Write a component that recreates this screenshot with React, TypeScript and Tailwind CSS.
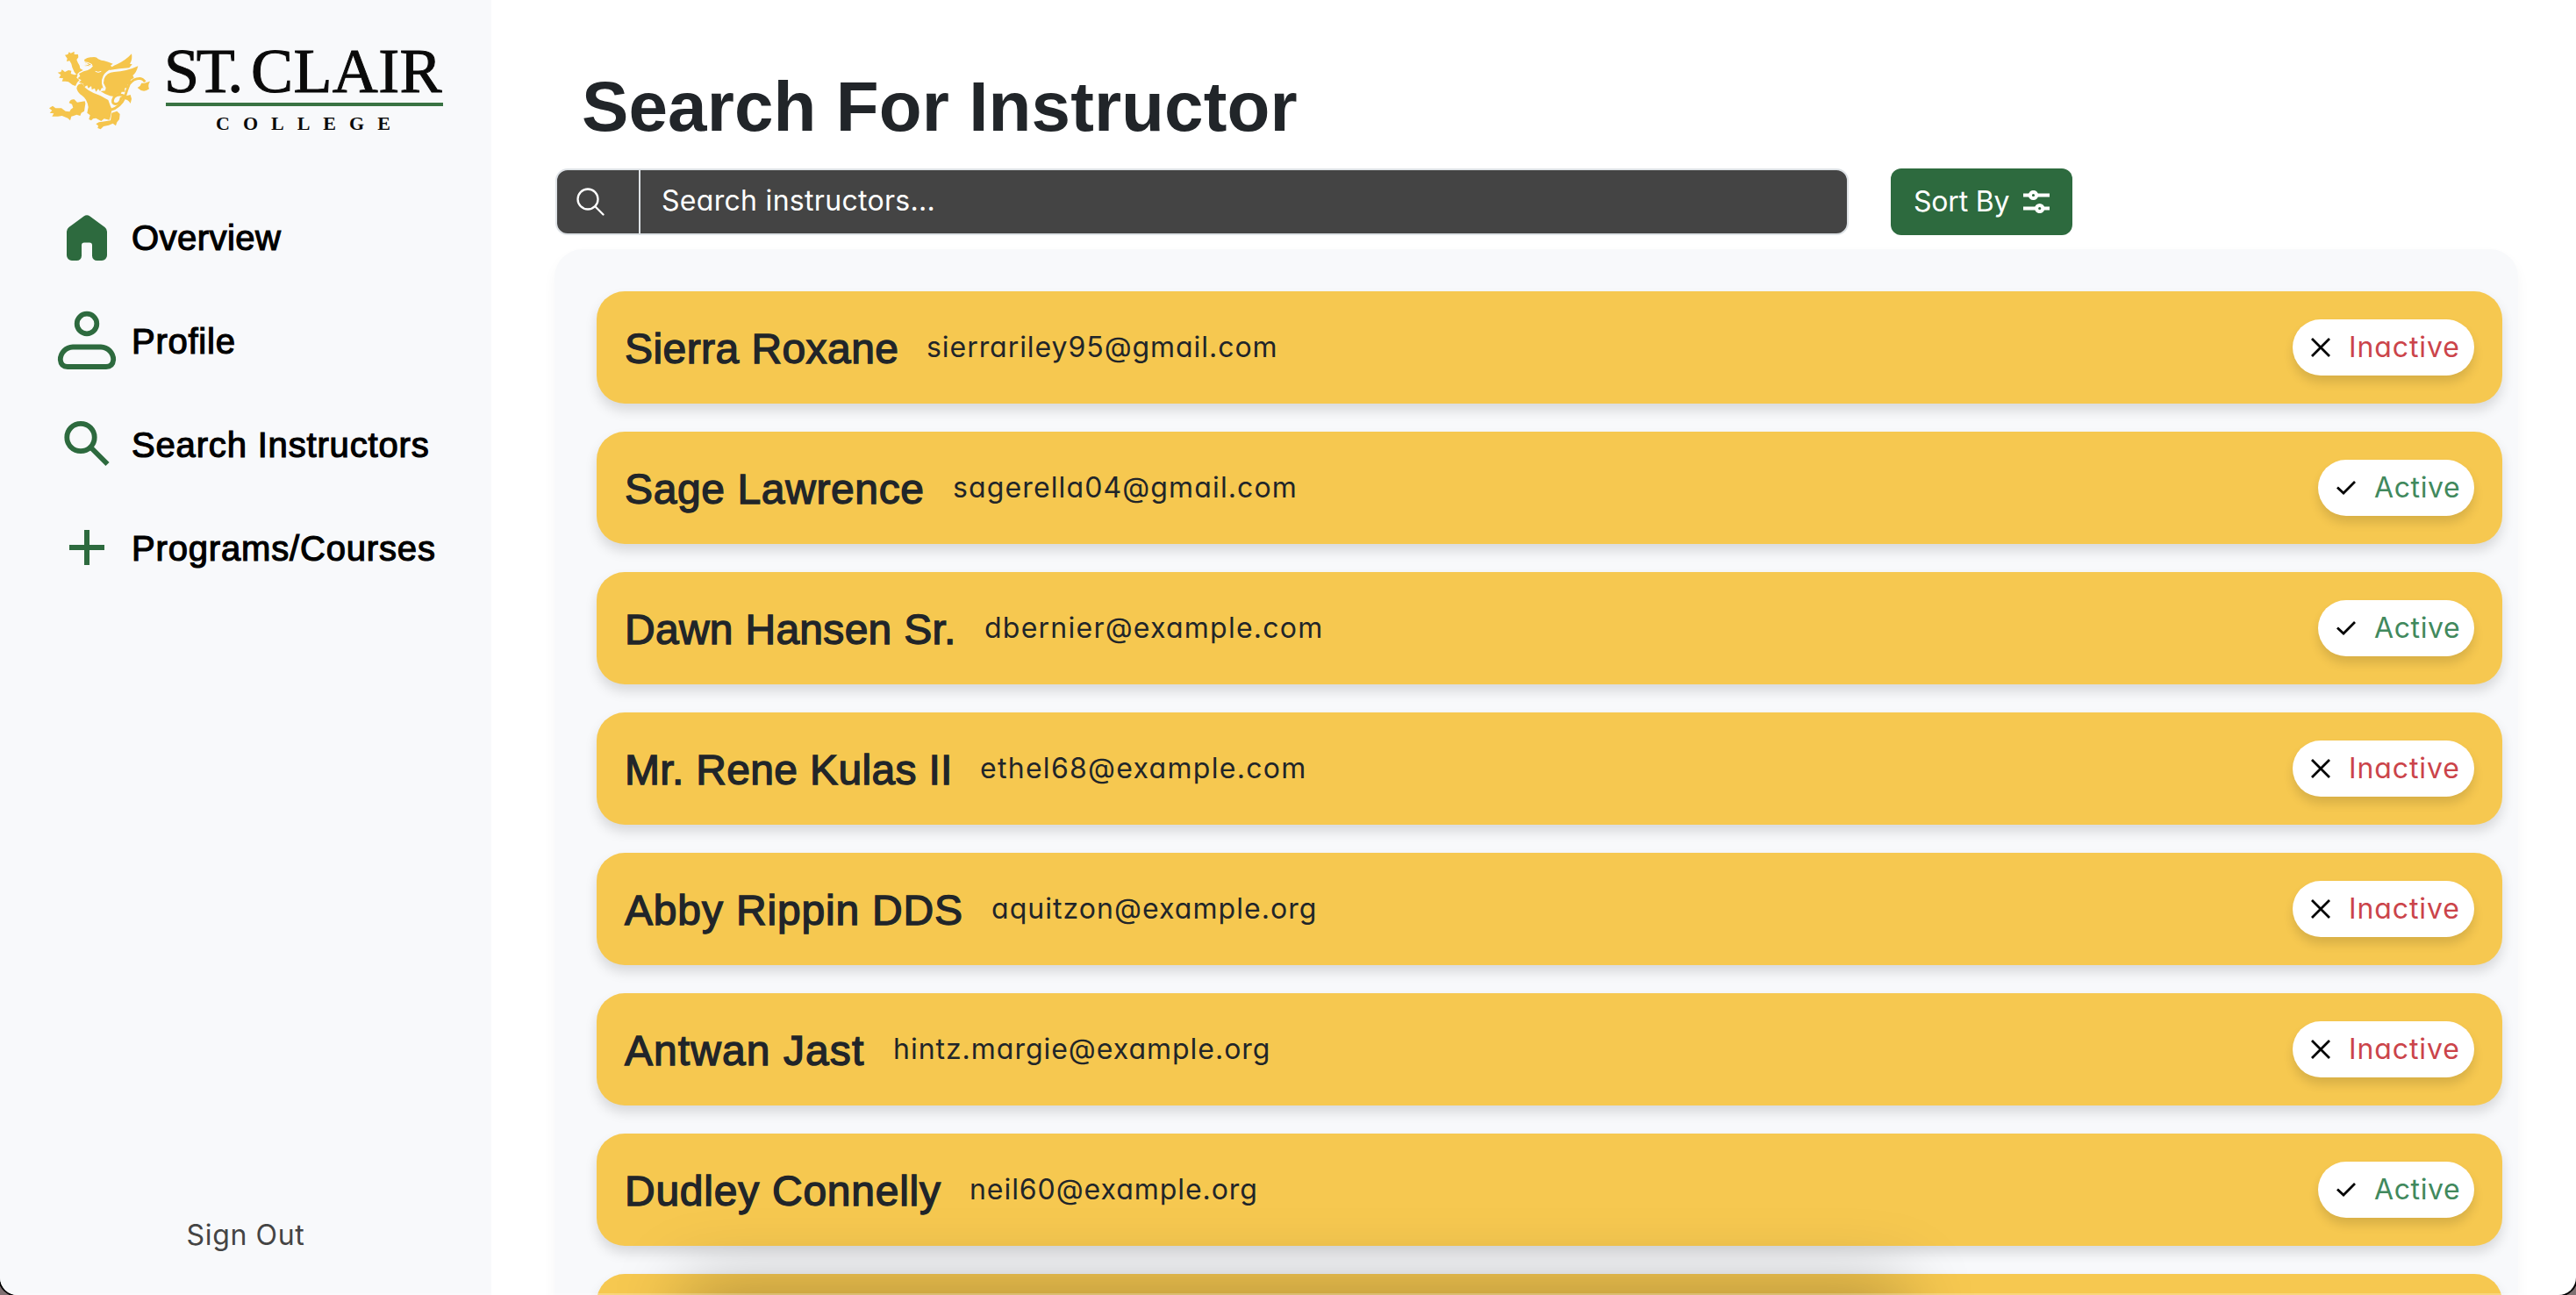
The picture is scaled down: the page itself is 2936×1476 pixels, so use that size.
import React from "react";

const HELV = "font-['Liberation_Sans',Arial,sans-serif]";
const POP = "font-['Inter',sans-serif] [font-feature-settings:'cv11','ss03']";

function Griffin() {
  return (
    <svg width="130" height="120" viewBox="0 0 390 360" fill="#f5c54c" className="shrink-0" aria-hidden="true">
      <path d="M72 68 L82 66 L86 58 L92 62 L104 56 L104 66 L117 66 L118 76 L112 84 L116 94 L122 104 L124 114 L134 120 L122 126 L112 136 L104 126 L97 110 L94 98 L88 88 L78 90 L80 80 Z" />
      <path d="M47 128 L58 126 L62 118 L72 126 L84 120 L94 122 L92 132 L104 136 L116 134 L112 146 L122 154 L114 162 L108 174 L98 170 L84 160 L74 158 L62 158 L66 148 L52 146 L58 136 Z" />
      <path d="M138 84 Q150 74 164 76 Q178 72 186 82 Q196 88 206 88 Q220 92 236 98 L228 104 L234 110 L222 120 Q206 130 202 142 Q196 154 198 166 L203 182 L198 180 L192 192 L186 184 L178 194 L174 182 L164 186 L162 174 L152 182 L148 172 L138 178 L134 166 L120 162 L128 154 L116 148 L124 140 L120 132 L136 124 L150 120 Q162 116 168 106 Q160 94 140 92 Z" />
      <path d="M136 92 Q152 92 165 101 Q152 111 133 103 Q146 102 152 100 Q142 97 136 92 Z" fill="#f5c54c" stroke="#f8f9fb" strokeWidth="3" />
      <path d="M222 120 Q232 106 250 100 Q280 86 300 64 Q304 84 294 98 L302 100 L292 112 Q260 114 222 120 Z" />
      <path d="M206 150 Q214 128 240 126 Q284 124 322 106 Q316 130 304 138 L308 146 L296 154 L300 162 L286 170 L290 178 L276 182 L278 194 L266 194 L262 204 L252 200 L240 210 L226 208 Q208 202 194 192 L210 190 L212 180 L204 164 Z" />
      <path d="M112 182 Q114 166 132 166 Q140 182 152 188 L170 198 Q196 206 220 222 Q226 240 232 252 Q230 276 224 290 L206 286 L196 294 L178 284 L168 286 L162 292 L154 288 L158 274 L148 266 L152 246 Q148 218 130 206 Q116 198 112 182 Z" />
      <path d="M18 250 L30 242 L40 250 L60 250 L74 260 L88 262 L92 254 L100 248 L96 236 L86 232 Q90 218 104 220 L114 230 L140 226 L142 234 L138 260 L128 266 L124 276 L112 272 L102 276 L94 278 L90 292 L82 284 L62 276 L48 278 L28 278 L34 268 L20 266 L28 258 Z" />
      <path d="M232 266 L250 260 L260 270 L258 288 L250 298 L246 310 L236 302 L222 308 L204 312 L194 322 L184 318 L186 310 L178 304 L188 298 L200 296 L228 292 Z" />
      <g fill="none" stroke="#f5c54c" strokeWidth="8.500">
        <path d="M228 256 Q262 246 276 214 Q284 186 292 168 Q306 148 328 148 Q340 150 346 160" />
        <path d="M276 208 Q254 198 240 212 Q228 234 246 236 Q262 234 264 216 Q280 206 294 222" />
      </g>
      <path d="M320 180 Q330 176 334 164 L344 164 L363 158 Q354 172 360 184 Q340 200 320 180 Z" />
      <path d="M282 208 L296 204 L300 218 L296 234 Q290 222 278 220 Z" />
      <path d="M176 124 Q186 130 196 124" fill="none" stroke="#f8f9fb" strokeWidth="3" />
    </svg>
  );
}

function Logo() {
  return (
    <div className="ml-[50px] flex h-[120px] w-[480px]">
      <Griffin />
      <div className="ml-[9px] w-[316px] font-['Liberation_Serif',serif] text-[#0a0a0a]">
        <div className="mt-[5px] flex h-[72px] items-start whitespace-nowrap text-[72px] leading-[72px]">
          <span className="-ml-[2px] w-[90px] tracking-[-3.2px] [-webkit-text-stroke:1px_#0a0a0a]">ST.</span>
          <span className="ml-[9px] tracking-[0.4px] [-webkit-text-stroke:1px_#0a0a0a]">CLAIR</span>
        </div>
        <div className="h-[4px] w-full bg-[#397343]" />
        <div className="ml-[57px] mt-[7px] whitespace-nowrap text-[22px] leading-[26px] font-bold tracking-[15px]">COLLEGE</div>
      </div>
    </div>
  );
}

const G = "#2d6a3e";

function HomeIcon() {
  return (
    <svg width="68" height="68" viewBox="0 0 68 68" aria-hidden="true">
      <path fill={G} d="M30.500 10.600a6 6 0 0 1 7 0l17 12.400q2.500 2 2.500 5V55a6 6 0 0 1-6 6H45.500a5.500 5.500 0 0 1-5.500-5.500V43.500a3 3 0 0 0-3-3h-6a3 3 0 0 0-3 3V55.500a5.500 5.500 0 0 1-5.500 5.500H17a6 6 0 0 1-6-6V28q0-3 2.500-5z" />
    </svg>
  );
}
function ProfileIcon() {
  return (
    <svg width="68" height="68" viewBox="0 0 68 68" fill="none" stroke={G} strokeWidth="5.800" aria-hidden="true">
      <circle cx="34" cy="15" r="11.300" />
      <path d="M18 41.500H50A14.500 14.500 0 0 1 64.200 56Q63.500 64 56 64H12Q4.500 64 3.800 56A14.500 14.500 0 0 1 18 41.500Z" />
    </svg>
  );
}
function SearchIcon() {
  return (
    <svg width="68" height="68" viewBox="0 0 68 68" fill="none" stroke={G} strokeWidth="5.800" aria-hidden="true">
      <circle cx="27" cy="26.500" r="15.700" />
      <path d="M38 37.500L57.500 57" />
    </svg>
  );
}
function PlusIcon() {
  return (
    <svg width="68" height="68" viewBox="0 0 68 68" fill="none" stroke={G} strokeWidth="6" aria-hidden="true">
      <path d="M34 14V54M14 34H54" />
    </svg>
  );
}

const nav = [
  { label: "Overview", icon: <HomeIcon />, cls: "tracking-[0.45px]" },
  { label: "Profile", icon: <ProfileIcon />, cls: "tracking-[0.75px]" },
  { label: "Search Instructors", icon: <SearchIcon />, cls: "tracking-[0.83px]" },
  { label: "Programs/Courses", icon: <PlusIcon />, cls: "tracking-[0.83px]" },
];

const people = [
  { name: "Sierra Roxane", nameCls: "w-[312px] tracking-[0.43px]", email: "sierrariley95@gmail.com", emailCls: "tracking-[0.95px]", active: false },
  { name: "Sage Lawrence", nameCls: "w-[342px] tracking-[0.62px]", email: "sagerella04@gmail.com", emailCls: "tracking-[1.13px]", active: true },
  { name: "Dawn Hansen Sr.", nameCls: "w-[378px] tracking-[0.28px]", email: "dbernier@example.com", emailCls: "tracking-[1.24px]", active: true },
  { name: "Mr. Rene Kulas II", nameCls: "w-[373px] tracking-[0.33px]", email: "ethel68@example.com", emailCls: "tracking-[1.29px]", active: false },
  { name: "Abby Rippin DDS", nameCls: "w-[386px] tracking-[0.83px]", email: "aquitzon@example.org", emailCls: "tracking-[1.05px]", active: false },
  { name: "Antwan Jast", nameCls: "w-[274px] tracking-[1.08px]", email: "hintz.margie@example.org", emailCls: "tracking-[0.98px]", active: false },
  { name: "Dudley Connelly", nameCls: "w-[361px] tracking-[0.75px]", email: "neil60@example.org", emailCls: "tracking-[0.94px]", active: true },
];

function Status({ active }: { active: boolean }) {
  return (
    <div className={`flex h-16 items-center rounded-[32px] bg-white shadow-[0_8px_12px_rgba(0,0,0,0.12)] ${active ? "w-[178px]" : "w-[207px]"}`}>
      <svg width="22" height="22" viewBox="0 0 22 22" fill="none" stroke="#000" strokeWidth="2.800" className="ml-[21px] shrink-0" aria-hidden="true">
        {active ? <path d="M1 10.500L8 17L21 4" /> : <path d="M1 1L21 21M21 1L1 21" />}
      </svg>
      <span className={`${POP} whitespace-nowrap text-[32px] leading-[48px] ${active ? "ml-[21px] text-[#41895d] tracking-[0.6px]" : "ml-[21px] text-[#cb444a] tracking-[0.9px]"}`}>
        {active ? "Active" : "Inactive"}
      </span>
    </div>
  );
}

const CARD = "h-32 shrink-0 rounded-[32px] bg-[#f6c850] shadow-[0_8px_14px_rgba(0,0,0,0.13)]";

export default function App() {
  return (
    <div className="relative h-[1476px] w-[2936px] overflow-hidden bg-[#7f7072]">
      <div className="flex h-full w-full overflow-hidden rounded-b-[20px] bg-white shadow-[0_0_0_2px_#000]">
        <aside className="flex w-[560px] shrink-0 flex-col bg-[#f8f9fb] pt-10">
          <Logo />
          <nav className="mt-[76px] flex flex-col gap-[50px] pl-[65px]">
            {nav.map((n) => (
              <div key={n.label} className="flex h-[68px] items-center gap-[17px]">
                {n.icon}
                <span className={`${HELV} pt-[2px] whitespace-nowrap text-[40px] leading-[48px] text-black [-webkit-text-stroke:1.2px_#000] ${n.cls}`}>{n.label}</span>
              </div>
            ))}
          </nav>
          <div className={`${POP} mt-auto mb-[44px] text-center text-[32px] leading-[48px] tracking-[0.65px] text-[#444444]`}>Sign Out</div>
        </aside>
        <main className="flex min-w-0 flex-1 flex-col pl-[72px] pr-[66px]">
          <h1 className={`${HELV} ml-[31px] mt-[74px] h-[96px] whitespace-nowrap text-[80px] leading-[96px] font-bold tracking-[0.1px] text-[#212529]`}>Search For Instructor</h1>
          <div className="mt-[22px] flex h-[76px] items-center">
            <div className="ml-px flex h-[76px] w-[1474px] overflow-hidden rounded-[14px] border-2 border-[#dee2e6] bg-[#444444]">
              <div className="flex w-[95px] items-center border-r-2 border-[#dee2e6] pl-[22px]">
                <svg width="32" height="32" viewBox="0 0 32 32" fill="none" stroke="#fff" strokeWidth="2.300" aria-hidden="true">
                  <circle cx="13" cy="13" r="11.500" />
                  <path d="M21.500 21.500L30.500 30.500" strokeLinecap="round" />
                </svg>
              </div>
              <span className={`${POP} ml-6 self-center whitespace-nowrap pb-[2px] text-[32px] leading-[46px] tracking-[0.3px] text-white`}>Search instructors...</span>
            </div>
            <button className="ml-12 flex h-[76px] w-[207px] items-center rounded-[12px] bg-[#2d6a3e] pl-[26px]">
              <span className={`${POP} w-[110px] whitespace-nowrap text-left text-[32px] leading-[48px] tracking-[-0.2px] text-white`}>Sort By</span>
              <svg width="30" height="26" viewBox="0 0 30 26" fill="none" stroke="#fff" strokeWidth="4" className="ml-[15px]" aria-hidden="true">
                <path d="M0 5.500H8M15 5.500H30M0 20.500H15M22 20.500H30" />
                <circle cx="11.500" cy="5.500" r="3.600" />
                <circle cx="18.700" cy="20.500" r="3.600" />
              </svg>
            </button>
          </div>
          <section className="mt-4 flex h-[1300px] flex-col gap-8 rounded-[32px] bg-[#f8f9fb] pt-12 pl-12 pr-[18px] shadow-[0_8px_16px_rgba(0,0,0,0.04)]">
            {people.map((p) => (
              <div key={p.email} className={`${CARD} flex items-center px-8`}>
                <span className={`${HELV} shrink-0 whitespace-nowrap pt-[3px] text-[48px] leading-[58px] text-[#212529] [-webkit-text-stroke:1.4px_#212529] ${p.nameCls}`}>{p.name}</span>
                <span className={`${POP} ml-8 whitespace-nowrap text-[32px] leading-[48px] text-[#212529] ${p.emailCls}`}>{p.email}</span>
                <div className="ml-auto">
                  <Status active={p.active} />
                </div>
              </div>
            ))}
            <div className={CARD} />
          </section>
        </main>
      </div>
      <div className="pointer-events-none absolute left-[800px] top-[1480px] h-[60px] w-[1350px] shadow-[0_0_80px_20px_rgba(0,0,0,0.25)]" />
      <div className="pointer-events-none absolute bottom-0 left-5 right-5 h-[2px] bg-white/25" />
    </div>
  );
}
